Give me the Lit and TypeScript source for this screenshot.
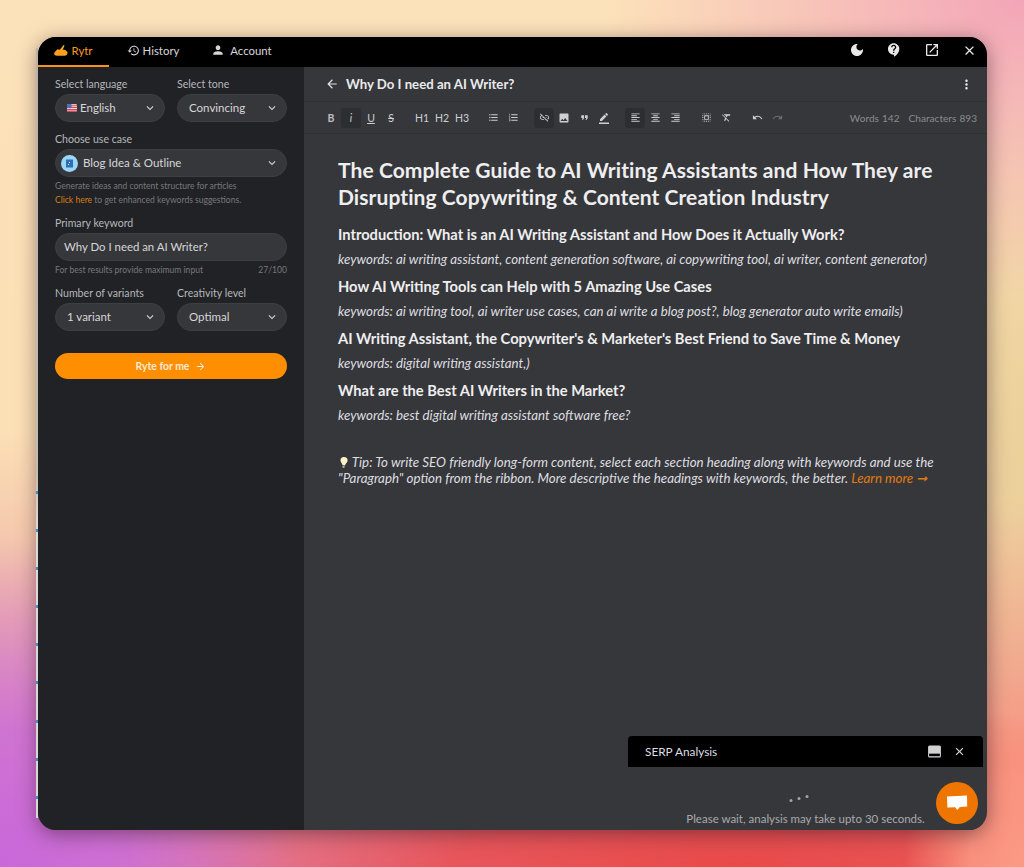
import { LitElement, html, css } from "lit";
import { customElement } from "lit/decorators.js";

const P: Record<string, string> = {
  history: "M13 3c-4.97 0-9 4.03-9 9H1l3.89 3.89.07.14L9 12H6c0-3.87 3.13-7 7-7s7 3.13 7 7-3.13 7-7 7c-1.93 0-3.68-.79-4.94-2.06l-1.42 1.42C8.27 19.99 10.51 21 13 21c4.97 0 9-4.03 9-9s-4.03-9-9-9zm-1 5v5l4.28 2.54.72-1.21-3.5-2.08V8H12z",
  person: "M12 12c2.21 0 4-1.79 4-4s-1.79-4-4-4-4 1.79-4 4 1.79 4 4 4zm0 2c-2.67 0-8 1.34-8 4v2h16v-2c0-2.66-5.33-4-8-4z",
  down: "M7.41 8.59L12 13.17l4.59-4.58L18 10l-6 6-6-6z",
  back: "M20 11H7.83l5.59-5.59L12 4l-8 8 8 8 1.41-1.41L7.83 13H20v-2z",
  forward: "M12 4l-1.41 1.41L16.17 11H4v2h12.17l-5.58 5.59L12 20l8-8z",
  more: "M12 8c1.1 0 2-.9 2-2s-.9-2-2-2-2 .9-2 2 .9 2 2 2zm0 2c-1.1 0-2 .9-2 2s.9 2 2 2 2-.9 2-2-.9-2-2-2zm0 6c-1.1 0-2 .9-2 2s.9 2 2 2 2-.9 2-2-.9-2-2-2z",
  close: "M19 6.41L17.59 5 12 10.59 6.41 5 5 6.41 10.59 12 5 17.59 6.41 19 12 13.41 17.59 19 19 17.59 13.41 12z",
  open: "M19 19H5V5h7V3H5c-1.11 0-2 .9-2 2v14c0 1.1.89 2 2 2h14c1.1 0 2-.9 2-2v-7h-2v7zM14 3v2h3.59l-9.83 9.83 1.41 1.41L19 6.41V10h2V3h-7z",
  moon: "M12 3c-4.97 0-9 4.03-9 9s4.03 9 9 9 9-4.03 9-9c0-.46-.04-.92-.1-1.36-.98 1.37-2.58 2.26-4.4 2.26-2.98 0-5.4-2.42-5.4-5.4 0-1.81.89-3.42 2.26-4.4-.44-.06-.9-.1-1.36-.1z",
  help: "M11.5 2C6.81 2 3 5.81 3 10.5S6.81 19 11.5 19h.5v3c4.86-2.34 8-7 8-11.5C20 5.81 16.19 2 11.5 2zm1 14.5h-2v-2h2v2zm0-3.5h-2c0-3.25 3-3 3-5 0-1.1-.9-2-2-2s-2 .9-2 2h-2c0-2.21 1.79-4 4-4s4 1.79 4 4c0 2.5-3 2.75-3 5z",
  bullets: "M4 10.5c-.83 0-1.5.67-1.5 1.5s.67 1.5 1.5 1.5 1.5-.67 1.5-1.5-.67-1.5-1.5-1.5zm0-6c-.83 0-1.5.67-1.5 1.5S3.17 7.5 4 7.5 5.5 6.83 5.5 6 4.83 4.5 4 4.5zm0 12c-.83 0-1.5.68-1.5 1.5s.68 1.5 1.5 1.5 1.5-.68 1.5-1.5-.67-1.5-1.5-1.5zM7 19h14v-2H7v2zm0-6h14v-2H7v2zm0-8v2h14V5H7z",
  numbers: "M2 17h2v.5H3v1h1v.5H2v1h3v-4H2v1zm1-9h1V4H2v1h1v3zm-1 3h1.8L2 13.1v.9h3v-1H3.2L5 10.9V10H2v1zm5-6v2h14V5H7zm0 14h14v-2H7v2zm0-6h14v-2H7v2z",
  linkoff: "M17 7h-4v1.9h4c1.71 0 3.1 1.39 3.1 3.1 0 1.43-.98 2.63-2.31 2.98l1.46 1.46C20.88 15.61 22 13.95 22 12c0-2.76-2.24-5-5-5zm-1 4h-2.19l2 2H16zM2 4.27l3.11 3.11C3.29 8.12 2 9.91 2 12c0 2.76 2.24 5 5 5h4v-1.9H7c-1.71 0-3.1-1.39-3.1-3.1 0-1.59 1.21-2.9 2.76-3.07L8.73 11H8v2h2.73L13 15.27V17h1.73l4.01 4L20 19.74 3.27 3 2 4.27z",
  image: "M21 19V5c0-1.1-.9-2-2-2H5c-1.1 0-2 .9-2 2v14c0 1.1.9 2 2 2h14c1.1 0 2-.9 2-2zM8.5 13.5l2.5 3.01L14.5 12l4.5 6H5l3.5-4.5z",
  quote: "M6 17h3l2-4V7H5v6h3zm8 0h3l2-4V7h-6v6h3z",
  pen: "M22 24H2v-3h20v3zM13.06 5.19l3.75 3.75L7.75 18H4v-3.75l9.06-9.06zm4.82 2.68-3.75-3.75 1.83-1.83c.39-.39 1.02-.39 1.41 0l2.34 2.34c.39.39.39 1.02 0 1.41l-1.83 1.83z",
  left: "M15 15H3v2h12v-2zm0-8H3v2h12V7zM3 13h18v-2H3v2zm0 8h18v-2H3v2zM3 3v2h18V3H3z",
  center: "M7 15v2h10v-2H7zm-4 6h18v-2H3v2zm0-8h18v-2H3v2zm4-6v2h10V7H7zM3 3v2h18V3H3z",
  right: "M3 21h18v-2H3v2zm6-4h12v-2H9v2zm-6-4h18v-2H3v2zm6-4h12V7H9v2zM3 3v2h18V3H3z",
  select: "M3 5h2V3c-1.1 0-2 .9-2 2zm0 8h2v-2H3v2zm4 8h2v-2H7v2zM3 9h2V7H3v2zm10-6h-2v2h2V3zm6 0v2h2c0-1.1-.9-2-2-2zM5 21v-2H3c0 1.1.9 2 2 2zm-2-4h2v-2H3v2zM9 3H7v2h2V3zm2 18h2v-2h-2v2zm8-8h2v-2h-2v2zm0 8c1.1 0 2-.9 2-2h-2v2zm0-12h2V7h-2v2zm0 8h2v-2h-2v2zm-4 4h2v-2h-2v2zm0-16h2V3h-2v2zM7 17h10V7H7v10zm2-8h6v6H9V9z",
  clear: "M3.27 5L2 6.27l6.97 6.97L6.5 19h3l1.57-3.66L16.73 21 18 19.73 3.55 5.27 3.27 5zM6 5v.18L8.82 8h2.4l-.72 1.68 2.1 2.1L14.21 8H20V5H6z",
  undo: "M12.5 8c-2.65 0-5.05.99-6.9 2.6L2 7v9h9l-3.62-3.62c1.39-1.16 3.16-1.88 5.12-1.88 3.54 0 6.55 2.31 7.6 5.5l2.37-.78C21.08 11.03 17.15 8 12.5 8z",
  redo: "M18.4 10.6C16.55 8.99 14.15 8 11.5 8c-4.65 0-8.58 3.03-9.96 7.22L3.9 16c1.05-3.19 4.05-5.5 7.6-5.5 1.95 0 3.73.72 5.12 1.88L13 16h9V7l-3.6 3.6z",
};

const icon = (name: string, size = 16, cls = "") =>
  html`<svg class="ic ${cls}" width=${size} height=${size} viewBox="0 0 24 24" fill="currentColor" aria-hidden="true"><path d=${P[name]}></path></svg>`;

const flag = html`<svg class="flag" width="10" height="8" viewBox="0 0 10 8" aria-hidden="true">
  <rect width="10" height="8" rx="1.4" fill="#e9e4e6"></rect>
  <path d="M0 1.2h10M0 3.4h10M0 5.6h10M0 7.4h10" stroke="#d8475a" stroke-width="1.1"></path>
  <rect width="4.6" height="4.2" rx="1" fill="#4f6fb8"></rect>
</svg>`;

const hand = html`<svg class="hand" width="14" height="11" viewBox="0 0 14 11" aria-hidden="true">
  <path d="M.4 7.6 3.4 4.2l2.3.6L8.4 1.6l1.5 1-1.2 2 2.6.3 2 1.8c.7 1.7-.3 3.9-2.2 4.1H2.8C.8 10.8-.4 9.1.4 7.6z" fill="#fb9f1d"></path>
  <path d="M8.2.9 10.4 0 9.9 2.4z" fill="#f6c552"></path>
</svg>`;

const bulb = html`<svg class="bulb" width="11" height="13" viewBox="0 0 11 13" aria-hidden="true">
  <path d="M5.8 1C8.2 1 10 2.6 9.6 4.8 9.3 6.5 7.6 7.4 7 9.6L4.5 9.2C4.4 7.4 2.6 6.4 2.5 4.4 2.4 2.4 3.8 1 5.8 1z" fill="#fdf3c8"></path>
  <path d="M4.4 9.9 6.8 10.3 6.3 12 4.6 11.8z" fill="#b9b6a8"></path>
</svg>`;

const tb = (c: unknown, active = false, dim = false) =>
  html`<span class="tb ${active ? "on" : ""} ${dim ? "dim" : ""}">${c}</span>`;

@customElement("app-root")
export class AppRoot extends LitElement {
  static styles = css`
    :host {
      display: block;
      position: relative;
      height: 867px;
      box-sizing: border-box;
      padding: 37px 37px 37px 38px;
      font-family: "Lato", "Noto Sans", sans-serif;
      color: #e4e4e6;
      background:
        radial-gradient(120px 200px at 100% 100%, #fb9a84 0%, rgba(251, 154, 132, 0.85) 45%, rgba(251, 154, 132, 0) 100%),
        radial-gradient(300px 330px at 0% 100%, #c968da 0%, rgba(201, 104, 218, 0.8) 42%, rgba(201, 104, 218, 0) 100%),
        radial-gradient(640px 170px at 72% 100%, #e94a48 0%, rgba(233, 74, 72, 0.82) 45%, rgba(233, 74, 72, 0) 100%),
        radial-gradient(220px 300px at 100% 92%, #f49a80 0%, rgba(244, 154, 128, 0) 100%),
        radial-gradient(420px 300px at 100% 0%, #f3a5b8 0%, rgba(243, 165, 184, 0) 100%),
        radial-gradient(220px 420px at 100% 52%, #ebd09a 0%, rgba(235, 208, 154, 0) 100%),
        linear-gradient(180deg, #fce2ba 0%, #fbdfb5 50%, #f0b5a6 72%, #e08cb4 100%);
    }
    * { box-sizing: border-box; }
    .ic { display: block; flex: none; }

    .edge {
      position: absolute; left: 36px; top: 48px; width: 2px; height: 770px;
      background: linear-gradient(180deg, #b9b2a6 0%, #c3bcb0 55%, #ddd9d6 62%, #d9d6d6 100%);
      z-index: 1;
    }
    .edge i {
      position: absolute; left: 0; width: 2px; height: 3px; background: #3f8fc4;
    }

    .win {
      height: 793px;
      width: 949px;
      border-radius: 18px;
      overflow: hidden;
      background: #36373b;
      display: flex;
      flex-direction: column;
      position: relative;
      box-shadow: 0 4px 20px rgba(45, 20, 35, 0.5);
    }

    /* top bar */
    .top { height: 30px; flex: none; background: #000; display: flex; align-items: stretch; }
    .tab {
      display: flex; align-items: center; justify-content: center; gap: 3px;
      font-size: 11.4px; color: #d6d6d8; height: 30px; padding-bottom: 4px;
    }
    .tab.rytr { width: 71px; color: #fb9a1e; border-bottom: 2px solid #f7931a; padding-bottom: 2px; }
    .tab.hist { width: 88px; }
    .tab.acct { width: 89px; gap: 5px; }
    .topright { margin-left: auto; margin-right: -1px; display: flex; align-items: center; padding-bottom: 4px; }
    .topright span { width: 37.5px; display: flex; justify-content: center; color: #e9e9ea; }

    .body { flex: 1; display: flex; min-height: 0; }

    /* sidebar */
    .side {
      width: 266px; flex: none; background: #212226;
      padding: 10px 17px 0;
      display: flex; flex-direction: column;
    }
    .two { display: grid; grid-template-columns: 110px 110px; column-gap: 12px; }
    .lab { font-size: 10.6px; line-height: 14px; color: #b6b7ba; margin-bottom: 3px; display: block; }
    .sel {
      height: 28px; border-radius: 14px; background: #36373b;
      border: 1px solid #3e3f43;
      display: flex; align-items: center; padding: 0 7px 0 11px;
      font-size: 11.5px; color: #d6d6d8;
    }
    .sel .txt { flex: 1; white-space: nowrap; padding-bottom: 2px; }
    .sel .flag { margin-right: 3px; }
    .sel.use { padding-left: 5px; margin-bottom: 2px; }
    .sel.use .txt { padding-left: 5px; }
    .sel.kwd { padding-left: 8px; font-size: 11.4px; }
    .blog { flex: none; display: block; }
    .hint { font-size: 8.55px; line-height: 14px; color: #77787c; white-space: nowrap; }
    .hint a { color: #d77c16; }
    .m1 { margin-top: 10px; }
    .m2 { margin-top: 9px; }
    .between { display: flex; justify-content: space-between; margin-top: 2px; }
    .two.var { margin-top: 9px; }
    .go {
      margin-top: 22px; height: 26px; border-radius: 13px; background: #ff8f00;
      display: flex; align-items: center; justify-content: center; gap: 6px;
      font-size: 10.4px; font-weight: 700; color: #f7e9d8;
    }

    /* main */
    .main { flex: 1; min-width: 0; position: relative; display: flex; flex-direction: column; }
    .head {
      height: 35px; flex: none; display: flex; align-items: center;
      padding: 0 13px 0 21px; border-bottom: 1px solid #2f3033;
    }
    .head .t { font-size: 13.2px; font-weight: 700; color: #eaeaeb; margin-left: 7px; flex: 1; }
    .bar {
      height: 32px; flex: none; display: flex; align-items: center;
      padding: 0 10px 0 17px; gap: 11px; border-bottom: 1px solid #2f3033;
    }
    .g { display: flex; align-items: center; }
    .tb {
      width: 20px; height: 20px; display: flex; align-items: center; justify-content: center;
      font-size: 10.5px; color: #cfcfd1; border-radius: 3px;
    }
    .tb b { color: #bdbdbf; }
    .tb.on { background: #2d2e31; }
    .tb.dim { color: #6b6c70; }
    .tb.h { font-size: 10.5px; }
    .tb u, .tb s { text-decoration-thickness: 1px; }
    .count { margin-left: auto; font-size: 10.1px; color: #8a8b8f; white-space: nowrap; word-spacing: 0.5px; }
    .count span + span { margin-left: 9px; }

    .doc { padding: 22px 33px 0 34px; flex: 1; }
    h1 {
      margin: 0 0 14px; font-size: 21px; line-height: 27px; font-weight: 700; color: #eeeeef;
      letter-spacing: 0.08px;
    }
    h3 {
      margin: 0; font-size: 14.7px; line-height: 20px; font-weight: 700; color: #eeeeef;
    }
    .kw { margin: 5px 0 7px; font-size: 13.3px; line-height: 20px; font-style: italic; color: #dedee0; }
    .tip {
      margin: 29px 0 0; font-size: 13.35px; line-height: 16px; font-style: italic; color: #dedee0;
    }
    .tip .bulb { display: inline-block; vertical-align: -2px; }
    .tip a { color: #e37a10; }

    .serp {
      position: absolute; right: 4px; bottom: 0; width: 355px; height: 94px;
      background: #36373b; border-radius: 4px 4px 0 0; overflow: hidden;
      display: flex; flex-direction: column;
    }
    .serp .hd {
      height: 31px; flex: none; background: #000; display: flex; align-items: center;
      padding: 0 17px; font-size: 11.8px; color: #dedee0;
    }
    .serp .hd b { font-weight: 400; flex: 1; }
    .serp .hd .min { margin-right: 11px; }
    .serp .bd { flex: 1; display: flex; flex-direction: column; align-items: center; }
    .dots { display: flex; align-items: flex-end; gap: 4.5px; margin-top: 25px; height: 10px; transform: translateX(-6.5px); }
    .dots i { display: block; width: 3.5px; height: 3.5px; border-radius: 50%; background: #a2a3a6; }
    .dots i:nth-child(2) { margin-bottom: 2px; }
    .dots i:nth-child(3) { margin-bottom: 4px; }
    .serp .msg { font-size: 11.5px; line-height: 14px; color: #a9aaad; margin-top: 10px; }
    .chat {
      position: absolute; right: 9px; bottom: 6px; width: 42px; height: 42px; border-radius: 50%;
      background: #ee7600; display: flex; align-items: center; justify-content: center;
    }
  `;

  render() {
    const dots = [443, 481, 519, 557, 595, 633, 672, 710, 748];
    return html`
      <div class="edge">${dots.map((y) => html`<i style="top:${y}px"></i>`)}</div>
      <div class="win">
        <div class="top">
          <div class="tab rytr">${hand}<span>Rytr</span></div>
          <div class="tab hist">${icon("history", 13)}<span>History</span></div>
          <div class="tab acct">${icon("person", 14)}<span>Account</span></div>
          <div class="topright">
            <span>${icon("moon", 16)}</span>
            <span>${icon("help", 16)}</span>
            <span>${icon("open", 16)}</span>
            <span>${icon("close", 15)}</span>
          </div>
        </div>
        <div class="body">
          <aside class="side">
            <div class="two">
              <div>
                <span class="lab">Select language</span>
                <div class="sel">${flag}<span class="txt">English</span>${icon("down", 14)}</div>
              </div>
              <div>
                <span class="lab">Select tone</span>
                <div class="sel"><span class="txt">Convincing</span>${icon("down", 14)}</div>
              </div>
            </div>
            <span class="lab m1">Choose use case</span>
            <div class="sel use">
              <svg class="blog" width="17" height="17" viewBox="0 0 17 17" aria-hidden="true">
                <circle cx="8.5" cy="8.5" r="8.5" fill="#9bd6f7"></circle>
                <rect x="5" y="4.5" width="7" height="8" fill="#2f6fb5"></rect>
                <rect x="8" y="7" width="1" height="1" fill="#cfe8f7"></rect>
                <rect x="7" y="9" width="1" height="1" fill="#cfe8f7"></rect>
              </svg>
              <span class="txt">Blog Idea &amp; Outline</span>${icon("down", 14)}
            </div>
            <div class="hint">Generate ideas and content structure for articles</div>
            <div class="hint"><a>Click here</a> to get enhanced keywords suggestions.</div>
            <span class="lab m2">Primary keyword</span>
            <div class="sel kwd"><span class="txt">Why Do I need an AI Writer?</span></div>
            <div class="hint between"><span>For best results provide maximum input</span><span>27/100</span></div>
            <div class="two var">
              <div>
                <span class="lab">Number of variants</span>
                <div class="sel"><span class="txt">1 variant</span>${icon("down", 14)}</div>
              </div>
              <div>
                <span class="lab">Creativity level</span>
                <div class="sel"><span class="txt">Optimal</span>${icon("down", 14)}</div>
              </div>
            </div>
            <div class="go"><span>Ryte for me</span>${icon("forward", 11)}</div>
          </aside>
          <main class="main">
            <div class="head">
              ${icon("back", 14)}
              <span class="t">Why Do I need an AI Writer?</span>
              ${icon("more", 15)}
            </div>
            <div class="bar">
              <div class="g">
                ${tb(html`<b>B</b>`)}${tb(html`<i>i</i>`, true)}${tb(html`<u>U</u>`)}${tb(html`<s>S</s>`)}
              </div>
              <div class="g">
                <span class="tb h">H1</span><span class="tb h">H2</span><span class="tb h">H3</span>
              </div>
              <div class="g">${tb(icon("bullets", 11))}${tb(icon("numbers", 11))}</div>
              <div class="g">
                ${tb(icon("linkoff", 11), true)}${tb(icon("image", 12))}${tb(icon("quote", 11))}${tb(icon("pen", 12))}
              </div>
              <div class="g">
                ${tb(icon("left", 11), true)}${tb(icon("center", 11))}${tb(icon("right", 11))}
              </div>
              <div class="g">${tb(icon("select", 11))}${tb(icon("clear", 11))}</div>
              <div class="g">${tb(icon("undo", 11))}${tb(icon("redo", 11), false, true)}</div>
              <div class="count"><span>Words 142</span><span>Characters 893</span></div>
            </div>
            <article class="doc">
              <h1>The Complete Guide to AI Writing Assistants and How They are Disrupting Copywriting &amp; Content Creation Industry</h1>
              <h3>Introduction: What is an AI Writing Assistant and How Does it Actually Work?</h3>
              <p class="kw">keywords: ai writing assistant, content generation software, ai copywriting tool, ai writer, content generator)</p>
              <h3>How AI Writing Tools can Help with 5 Amazing Use Cases</h3>
              <p class="kw">keywords: ai writing tool, ai writer use cases, can ai write a blog post?, blog generator auto write emails)</p>
              <h3>AI Writing Assistant, the Copywriter's &amp; Marketer's Best Friend to Save Time &amp; Money</h3>
              <p class="kw">keywords: digital writing assistant,)</p>
              <h3>What are the Best AI Writers in the Market?</h3>
              <p class="kw">keywords: best digital writing assistant software free?</p>
              <p class="tip">${bulb} Tip: To write SEO friendly long-form content, select each section heading along with keywords and use the "Paragraph" option from the ribbon. More descriptive the headings with keywords, the better. <a>Learn more ➞</a></p>
            </article>
            <section class="serp">
              <div class="hd">
                <b>SERP Analysis</b>
                <svg class="ic min" width="15" height="15" viewBox="0 0 14 14" aria-hidden="true">
                  <rect x="1" y="1.5" width="12" height="11" rx="1.4" fill="#d2d2d4"></rect>
                  <rect x="2" y="9" width="10" height="2.4" fill="#000"></rect>
                </svg>
                ${icon("close", 13)}
              </div>
              <div class="bd">
                <div class="dots"><i></i><i></i><i></i></div>
                <div class="msg">Please wait, analysis may take upto 30 seconds.</div>
              </div>
            </section>
            <div class="chat">
              <svg width="22" height="20" viewBox="0 0 22 20" aria-hidden="true">
                <path d="M1 3.6 21 2.4l.2 11.2-7.4.4L11.3 17l-2.2-2.8-7.7.3z" fill="#fff"></path>
              </svg>
            </div>
          </main>
        </div>
      </div>
    `;
  }
}
